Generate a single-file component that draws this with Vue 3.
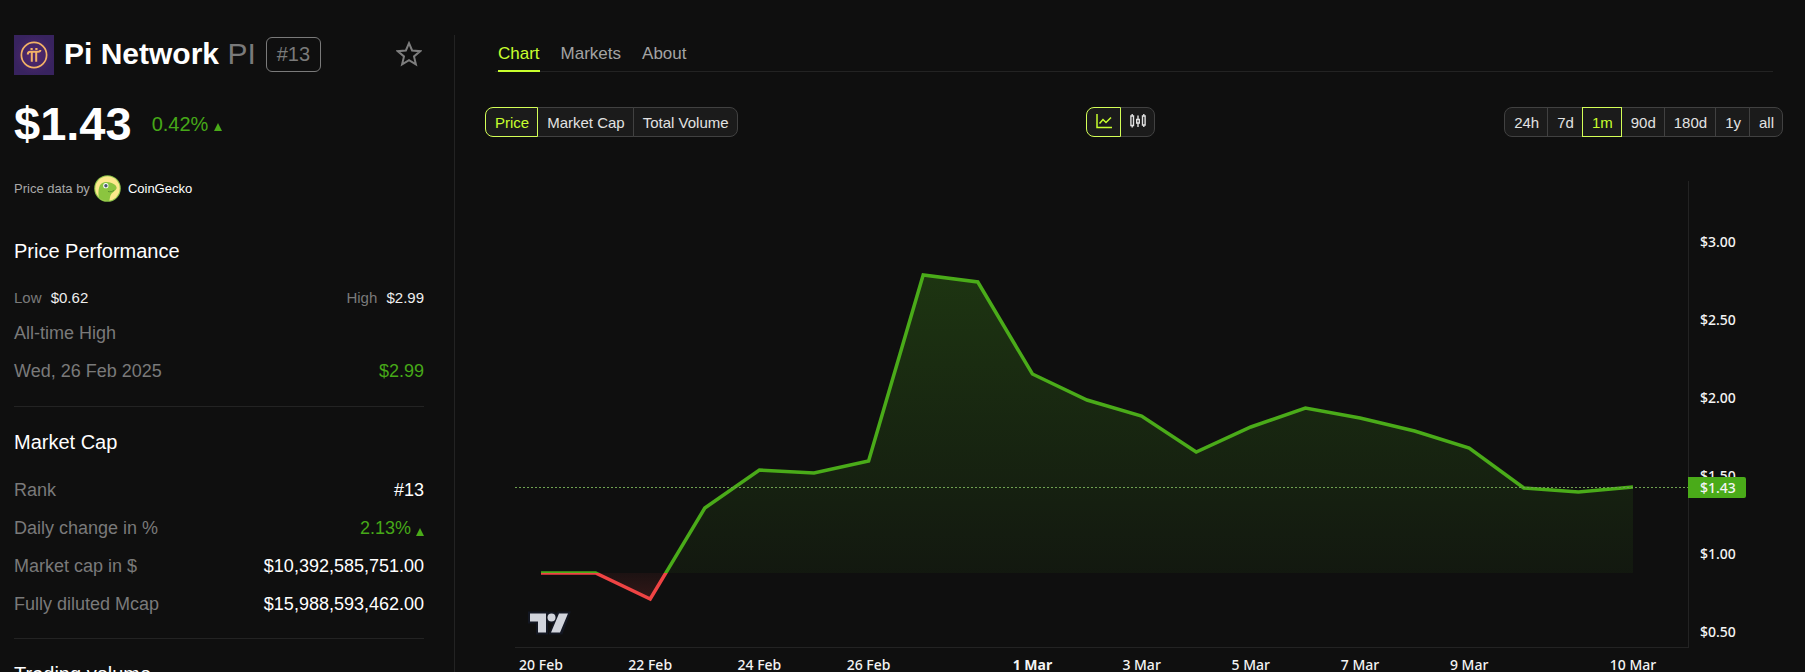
<script setup>
import { ref, computed } from 'vue'

const tabs = ['Chart', 'Markets', 'About']
const activeTab = ref('Chart')

const metrics = ['Price', 'Market Cap', 'Total Volume']
const activeMetric = ref('Price')

const activeStyle = ref('line')

const ranges = ['24h', '7d', '1m', '90d', '180d', '1y', 'all']
const activeRange = ref('1m')

const marketRows = [
  { label: 'Rank', value: '#13' },
  { label: 'Daily change in %', value: '2.13%', up: true },
  { label: 'Market cap in $', value: '$10,392,585,751.00' },
  { label: 'Fully diluted Mcap', value: '$15,988,593,462.00' },
]

const baseline = 392
const samples = [
  392, 392, 418, 327, 289, 292, 280, 94, 101, 193, 219,
  235, 271, 246, 227, 237, 250, 267, 307, 311, 306,
]
const stepX = 54.6
const firstX = 26
const points = computed(() =>
  samples.map((y, i) => `${(firstX + i * stepX).toFixed(1)},${y}`).join(' ')
)
const area = computed(() => `26,${baseline} ${points.value} 1118,${baseline}`)

const priceTicks = [
  { y: 61, label: '$3.00' },
  { y: 139, label: '$2.50' },
  { y: 217, label: '$2.00' },
  { y: 295, label: '$1.50' },
  { y: 373, label: '$1.00' },
  { y: 451, label: '$0.50' },
]
const dateTicks = [
  { i: 0, label: '20 Feb' },
  { i: 2, label: '22 Feb' },
  { i: 4, label: '24 Feb' },
  { i: 6, label: '26 Feb' },
  { i: 9, label: '1 Mar', strong: true },
  { i: 11, label: '3 Mar' },
  { i: 13, label: '5 Mar' },
  { i: 15, label: '7 Mar' },
  { i: 17, label: '9 Mar' },
  { i: 20, label: '10 Mar' },
]
</script>

<template>
  <div class="page">
    <aside class="sidebar">
      <header class="coin">
        <svg class="coin-logo" viewBox="0 0 40 40" aria-hidden="true">
          <defs>
            <radialGradient id="logoBg">
              <stop offset="0" stop-color="#55286f" />
              <stop offset="1" stop-color="#38235f" />
            </radialGradient>
          </defs>
          <rect width="40" height="40" fill="url(#logoBg)" />
          <g fill="none" stroke="#f3b267" stroke-width="2">
            <circle cx="20" cy="20" r="12.6" stroke-width="1.7" />
            <path d="M13.800 19.500c0-2 .8-2.700 2.400-2.700h7.800c1.500 0 2.300-.4 2.400-1.800M17.800 17v9.800M22.200 17v9.800" />
          </g>
          <path fill="#f3b267" d="M16.500 12.900h2.200v2.200h-2.200zM21.300 12.900h2.200v2.200h-2.200z" />
        </svg>
        <h1 class="coin-name">Pi Network <span class="symbol">PI</span></h1>
        <span class="rank-badge">#13</span>
        <button class="star" type="button" aria-label="Add to favourites">
          <svg viewBox="0 0 26 26" aria-hidden="true">
            <path
              d="M13 2.200l3.100 7.300 8 .7-6.100 5.200 1.900 7.900L13 19.100l-6.900 4.200L8 15.400 1.900 10.200l8-.7z"
              fill="none"
              stroke="#7e7e7e"
              stroke-width="2"
            />
          </svg>
        </button>
      </header>

      <div class="price-line">
        <strong class="price">$1.43</strong>
        <span class="change">0.42% <svg class="up" viewBox="0 0 8 8" aria-hidden="true"><path d="M4 0l4 8H0z" /></svg></span>
      </div>

      <div class="provider">
        <span class="muted">Price data by</span>
        <a class="gecko" href="#">
          <svg viewBox="0 0 27 27" aria-hidden="true">
            <circle cx="13.500" cy="13.500" r="13.300" fill="#8bc34a" />
            <circle cx="13.500" cy="13.500" r="12.200" fill="#fbe88b" />
            <path
              d="M4.800 22.500C3.800 15 5 8.300 10 7.200c4.500-1 7.500.5 10.500 2.300 2.300 1.500 2.800 3.800 1.300 5.300-1.600 1.700-4.500 3.400-5.300 5.700-.7 2.300-.8 3.800-1.200 5.400-4.500.4-8-.9-10.500-3.400z"
              fill="#8bc53f"
            />
            <circle cx="11.800" cy="10.700" r="2.600" fill="#fff" />
            <circle cx="11.900" cy="10.700" r="1.700" fill="#48566b" />
            <path d="M14 16.500c2.200.6 4.200.2 6.200-1.200" fill="none" stroke="#598f2c" />
          </svg>
          CoinGecko
        </a>
      </div>

      <section class="block first">
        <h2>Price Performance</h2>
        <div class="low-high">
          <span>Low <b>$0.62</b></span>
          <span>High <b>$2.99</b></span>
        </div>
        <p class="row">All-time High</p>
        <p class="row"><span>Wed, 26 Feb 2025</span><span class="green">$2.99</span></p>
      </section>

      <section class="block">
        <h2>Market Cap</h2>
        <dl>
          <div v-for="row in marketRows" :key="row.label" class="row">
            <dt>{{ row.label }}</dt>
            <dd :class="{ green: row.up }">
              {{ row.value }}
              <svg v-if="row.up" class="up" viewBox="0 0 8 8" aria-hidden="true"><path d="M4 0l4 8H0z" /></svg>
            </dd>
          </div>
        </dl>
      </section>

      <section class="block">
        <h2>Trading volume</h2>
      </section>
    </aside>

    <main class="main">
      <nav class="tabs">
        <a
          v-for="tab in tabs"
          :key="tab"
          href="#"
          :class="{ active: tab === activeTab }"
          @click.prevent="activeTab = tab"
        >{{ tab }}</a>
      </nav>

      <div class="controls">
        <div class="group">
          <button
            v-for="metric in metrics"
            :key="metric"
            type="button"
            :class="{ active: metric === activeMetric }"
            @click="activeMetric = metric"
          >{{ metric }}</button>
        </div>
        <div class="group icons">
          <button
            type="button"
            aria-label="Line chart"
            :class="{ active: activeStyle === 'line' }"
            @click="activeStyle = 'line'"
          >
            <svg viewBox="0 0 16 16" aria-hidden="true">
              <path d="M1 0v13.500h15" fill="none" stroke="currentColor" stroke-width="1.500" />
              <path d="M3.500 9.500L7 5.500l3 3 5-5" fill="none" stroke="currentColor" stroke-width="1.500" />
            </svg>
          </button>
          <button
            type="button"
            aria-label="Candlestick chart"
            :class="{ active: activeStyle === 'candles' }"
            @click="activeStyle = 'candles'"
          >
            <svg viewBox="0 0 16 16" aria-hidden="true">
              <g fill="none" stroke="currentColor" stroke-width="1.400">
                <path d="M.9 2h2.600v9.500H.9zM6.700 5.500h2.600v3.500H6.700zM12.500 2h2.600v9h-2.600z" />
                <path d="M2.200 0v2M2.200 11.500V13.500M8 1.500v4M8 9v4M13.800 0v2M13.800 11v2" />
              </g>
            </svg>
          </button>
        </div>
        <div class="group">
          <button
            v-for="range in ranges"
            :key="range"
            type="button"
            :class="{ active: range === activeRange }"
            @click="activeRange = range"
          >{{ range }}</button>
        </div>
      </div>

      <svg class="chart" viewBox="0 0 1268 491" role="img" aria-label="Pi Network price, last month">
        <defs>
          <linearGradient id="gain" gradientUnits="userSpaceOnUse" x1="0" y1="94" x2="0" y2="392">
            <stop offset="0" stop-color="#4aab19" stop-opacity="0.240" />
            <stop offset="1" stop-color="#4aab19" stop-opacity="0.060" />
          </linearGradient>
          <linearGradient id="loss" gradientUnits="userSpaceOnUse" x1="0" y1="392" x2="0" y2="418">
            <stop offset="0" stop-color="#ef4444" stop-opacity="0.060" />
            <stop offset="1" stop-color="#ef4444" stop-opacity="0.160" />
          </linearGradient>
          <clipPath id="above"><rect x="26" y="0" width="1092" height="392" /></clipPath>
          <clipPath id="below"><rect x="26" y="392" width="1092" height="70" /></clipPath>
        </defs>

        <path d="M1173.500 0V467M0 466.500H1174" stroke="#232323" />

        <g clip-path="url(#above)">
          <polygon :points="area" fill="url(#gain)" />
          <polyline :points="points" class="line gain" />
        </g>
        <g clip-path="url(#below)">
          <polygon :points="area" fill="url(#loss)" />
          <polyline :points="points" class="line loss" />
        </g>
        <path class="last-price" d="M0 306.500H1173" />

        <g>
          <path
            d="M15 432.500h16v19h-8v-11h-8zM44 432.500h9l-7 19h-9.500z"
            stroke="#131722"
            stroke-width="4"
            fill="#131722"
          />
          <circle cx="36.500" cy="436.500" r="6" fill="#131722" />
          <path d="M15 432.500h16v19h-8v-11h-8zM44 432.500h9l-8 19h-9z" fill="#d1d4dc" />
          <circle cx="36.500" cy="436.500" r="4" fill="#d1d4dc" />
        </g>

        <g class="ticks">
          <text v-for="tick in priceTicks" :key="tick.label" x="1185" :y="tick.y + 5">{{ tick.label }}</text>
        </g>
        <path d="M1173 296h56a2 2 0 0 1 2 2v17a2 2 0 0 1-2 2h-56z" fill="#4aab19" />
        <g class="ticks">
          <text x="1185" y="312">$1.43</text>
        </g>
        <g class="ticks dates">
          <text
            v-for="tick in dateTicks"
            :key="tick.label"
            :x="firstX + tick.i * stepX"
            y="489"
            :class="{ strong: tick.strong }"
          >{{ tick.label }}</text>
        </g>
      </svg>
    </main>
  </div>
</template>

<style>
body {
  margin: 0;
  background: #0f0f0f;
}
</style>

<style scoped>
.page {
  display: flex;
  box-sizing: border-box;
  height: 100vh;
  overflow: hidden;
  padding: 35px 22px 0 14px;
  background: #0f0f0f;
  color: #fff;
  font-family: "Liberation Sans", Arial, sans-serif;
}

.sidebar {
  flex: 0 0 410px;
  padding-right: 30px;
  border-right: 1px solid #232323;
}

.coin {
  display: flex;
  align-items: center;
  height: 40px;
}

.coin-logo {
  width: 40px;
  height: 40px;
  margin-right: 10px;
}

.coin-name {
  margin: 0;
  font-size: 30px;
  line-height: 38px;
  white-space: nowrap;
}

.symbol {
  color: #7a7a7a;
  font-weight: 400;
}

.rank-badge {
  margin-left: 10px;
  padding: 0 10px;
  border: 1px solid #7a7a7a;
  border-radius: 6px;
  color: #7a7a7a;
  font-size: 20px;
  line-height: 33px;
}

.coin-name,
.rank-badge,
.star {
  margin-bottom: 2px;
}

.star {
  width: 26px;
  height: 26px;
  margin-left: auto;
  margin-right: 2px;
  padding: 0;
  border: 0;
  background: none;
}

.star svg {
  display: block;
}

.price-line {
  display: flex;
  align-items: center;
  height: 56px;
  margin-top: 21px;
}

.price {
  font-size: 47px;
  line-height: 56px;
}

.change {
  margin-left: 20px;
  color: #46a818;
  font-size: 20px;
}

.up {
  width: 8px;
  height: 8px;
  fill: #4aab19;
}

dd .up {
  vertical-align: -2px;
}

.provider {
  display: flex;
  align-items: center;
  height: 27px;
  margin-top: 23px;
  font-size: 13px;
}

.muted {
  color: #a8a8a8;
}

.gecko {
  display: flex;
  align-items: center;
  gap: 7px;
  margin-left: 4px;
  color: #fff;
  text-decoration: none;
}

.gecko svg {
  width: 27px;
  height: 27px;
}

.block {
  margin-top: 16px;
  padding-top: 23px;
  border-top: 1px solid #232323;
}

.block.first {
  margin-top: 37px;
  padding-top: 0;
  border-top: 0;
}

.block:last-child {
  margin-top: 15px;
}

h2 {
  margin: 0 0 17px;
  font-size: 20px;
  font-weight: 400;
  line-height: 24px;
}

dl,
dd,
p {
  margin: 0;
}

.low-high {
  display: flex;
  align-items: center;
  justify-content: space-between;
  height: 34px;
  color: #7a7a7a;
  font-size: 15px;
}

.low-high b {
  margin-left: 5px;
  color: #eee;
  font-weight: 400;
}

.row {
  display: flex;
  align-items: center;
  justify-content: space-between;
  height: 38px;
  color: #7a7a7a;
  font-size: 18px;
}

dd {
  color: #fff;
}

.row .green {
  color: #46a818;
}

.main {
  flex: 1;
  min-width: 0;
  padding-left: 30px;
}

.tabs {
  display: flex;
  gap: 21px;
  height: 36px;
  margin: 0 10px;
  padding-left: 3px;
  border-bottom: 1px solid #232323;
}

.tabs a {
  box-sizing: border-box;
  height: 37px;
  border-bottom: 2px solid transparent;
  color: #a3a3a3;
  font-size: 17px;
  line-height: 38px;
  text-decoration: none;
}

.tabs a.active {
  border-color: #c8ff2e;
  color: #c8ff2e;
}

.controls {
  display: flex;
  justify-content: space-between;
  margin-top: 35px;
}

.group {
  display: flex;
}

.group button {
  height: 30px;
  margin-left: -1px;
  padding: 0 8px 0 9px;
  border: 1px solid #414141;
  background: #1b1b1b;
  color: #e2e2e2;
  font-family: inherit;
  font-size: 15px;
}

.group button:first-child {
  margin-left: 0;
  border-radius: 8px 0 0 8px;
}

.group button:last-child {
  border-radius: 0 8px 8px 0;
}

.group button.active {
  position: relative;
  border-color: #d4ff57;
  color: #c8ff2e;
}

.icons svg {
  display: block;
  width: 16px;
  height: 16px;
}

.chart {
  display: block;
  width: calc(100% - 30px);
  margin: 44px 0 0 30px;
}

.line {
  fill: none;
  stroke-width: 3.5;
}

.gain {
  stroke: #4aab19;
}

.loss {
  stroke: #ef4444;
}

.last-price {
  fill: none;
  stroke: #6fa350;
  stroke-dasharray: 2 2;
}

.ticks {
  fill: #f4f4f4;
  font-family: "Noto Sans", sans-serif;
  font-size: 14px;
  font-weight: 500;
}

.dates {
  text-anchor: middle;
}

.ticks .strong {
  font-weight: 700;
}
</style>
